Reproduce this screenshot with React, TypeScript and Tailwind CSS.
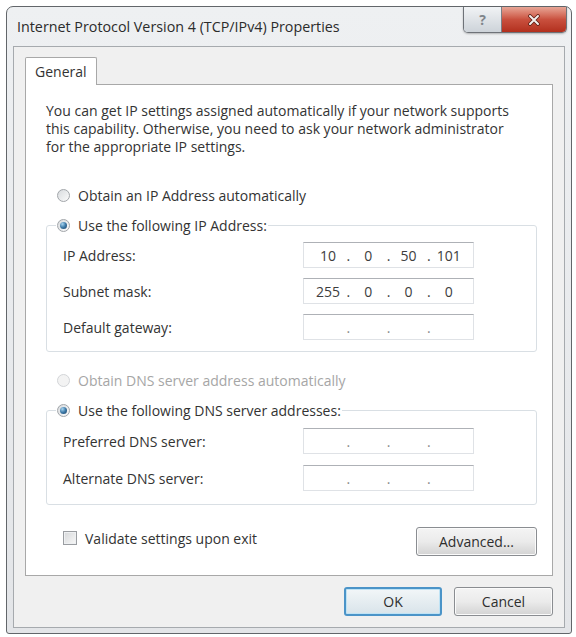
import React from 'react';

// Win7-style radio bullet
function Radio({ checked = false, disabled = false }: { checked?: boolean; disabled?: boolean }) {
  return (
    <span
      className={`shrink-0 w-[13px] h-[13px] rounded-full border flex items-center justify-center ${
        disabled
          ? 'border-[#d3d5d8] bg-[#f3f3f3]'
          : 'border-[#a2a6aa] bg-gradient-to-br from-[#d8dbde] to-[#fbfbfb]'
      }`}
    >
      {checked && (
        <span className="w-[7px] h-[7px] rounded-full bg-radial-[at_35%_30%] from-[#a6d4f0] via-[#3c78a6] to-[#1b4064]" />
      )}
    </span>
  );
}

// IP address box: four octets split by dots
function IpField({ value }: { value?: string[] }) {
  const parts = value ?? ['', '', '', ''];
  const empty = !value;
  return (
    <div className="w-[171px] h-[26px] bg-white border border-[#dfe2e6] border-t-[#aeb1b6] flex items-center px-[6px] text-[#3d3d3d]">
      {parts.map((p, i) => (
        <React.Fragment key={i}>
          <span className="flex-1 text-center">{p}</span>
          {i < 3 && (
            <span className={`w-[4px] text-center ${empty ? 'text-[#8a8a8a]' : 'text-[#3d3d3d]'}`}>.</span>
          )}
        </React.Fragment>
      ))}
    </div>
  );
}

function Row({ label, value }: { label: string; value?: string[] }) {
  return (
    <div className="flex items-center h-[26px] pl-[16px]">
      <span className="w-[240px]">{label}</span>
      <IpField value={value} />
    </div>
  );
}

function WinButton({ label, width, primary = false }: { label: string; width: string; primary?: boolean }) {
  return (
    <button
      className={`${width} h-[29px] rounded-[3px] flex items-center justify-center text-[#2e2e2e] ${
        primary
          ? 'border-2 border-[#4b94c8] bg-gradient-to-b from-[#f2f6f8] to-[#d9e4ea] shadow-[inset_0_0_0_1px_#bfe3f5]'
          : 'border border-[#8a8d91] bg-gradient-to-b from-[#f4f4f4] via-[#ebebeb] to-[#d3d3d3] shadow-[inset_0_0_0_1px_#fbfbfb]'
      }`}
    >
      {label}
    </button>
  );
}

export default function App() {
  return (
    <div className="w-[576px] h-[637px] bg-white pt-[6px] pl-[6px] pr-[4px] pb-[3px] font-['Open_Sans',sans-serif] text-[14px] text-[#333333]">
      <div className="h-full flex flex-col rounded-t-[7px] rounded-b-[3px] border border-[#62666a] bg-gradient-to-b from-[#eef0f2] to-[#e3e5e8]">
        {/* title bar */}
        <div className="h-[39px] shrink-0 flex items-start justify-between pl-[10px] pr-[4px]">
          <span className="self-center text-[14.3px] text-[#2b2b2b]">Internet Protocol Version 4 (TCP/IPv4) Properties</span>
          <div className="flex h-[26px] rounded-b-[5px] border border-t-0 border-[#6e7278] overflow-hidden shadow-[0_1px_2px_rgba(0,0,0,0.25)]">
            <div className="w-[38px] flex items-center justify-center bg-gradient-to-b from-[#f1f3f5] to-[#cdd3d9] border-r border-[#7b7f85] text-[14px] font-bold text-[#80858b]">
              ?
            </div>
            <div className="w-[64px] flex items-center justify-center bg-gradient-to-b from-[#e7a596] via-[#c9503e] to-[#b22f1d]">
              <svg width="14" height="12" viewBox="0 0 14 12">
                <path d="M3 2 L11 10 M11 2 L3 10" stroke="#5b1f16" strokeWidth="3.6" strokeLinecap="round" />
                <path d="M3 2 L11 10 M11 2 L3 10" stroke="#f4f0ee" strokeWidth="2" strokeLinecap="round" />
              </svg>
            </div>
          </div>
        </div>

        {/* client area */}
        <div className="flex-1 mx-[6px] mb-[5px] border border-[#a6aaae] bg-[#f0f0f0] pt-[10px] px-[11px] pb-[11px] flex flex-col">
          <div className="flex">
            <div className="relative z-10 -mb-px w-[72px] h-[28px] bg-white border border-b-0 border-[#a8a8a8] rounded-t-[2px] flex items-center pl-[9px]">
              General
            </div>
          </div>

          <div className="h-[492px] bg-white border border-[#a8a8a8] pl-[20px] pr-[15px] pt-[17px] flex flex-col">
            <p className="leading-[18px] whitespace-nowrap">
              You can get IP settings assigned automatically if your network supports
              <br />
              this capability. Otherwise, you need to ask your network administrator
              <br />
              for the appropriate IP settings.
            </p>

            <div className="mt-[30px] h-[18px] ml-[11px] flex items-center gap-[8px]">
              <Radio />
              <span>Obtain an IP Address automatically</span>
            </div>

            <fieldset className="mt-[12px] border border-[#d9dfe4] rounded-[3px] pt-[8px] pb-[11px] flex flex-col gap-[10px]">
              <legend className="ml-[9px] px-[1px]">
                <span className="h-[18px] flex items-center gap-[8px]">
                  <Radio checked />
                  <span>Use the following IP Address:</span>
                </span>
              </legend>
              <Row label="IP Address:" value={['10', '0', '50', '101']} />
              <Row label="Subnet mask:" value={['255', '0', '0', '0']} />
              <Row label="Default gateway:" />
            </fieldset>

            <div className="mt-[19px] h-[18px] ml-[11px] flex items-center gap-[8px] text-[#a6a6a6]">
              <Radio disabled />
              <span>Obtain DNS server address automatically</span>
            </div>

            <fieldset className="mt-[12px] border border-[#d9dfe4] rounded-[3px] pt-[9px] pb-[13px] flex flex-col gap-[11px]">
              <legend className="ml-[9px] px-[1px]">
                <span className="h-[18px] flex items-center gap-[8px]">
                  <Radio checked />
                  <span>Use the following DNS server addresses:</span>
                </span>
              </legend>
              <Row label="Preferred DNS server:" />
              <Row label="Alternate DNS server:" />
            </fieldset>

            <div className="mt-[22px] flex items-start justify-between">
              <div className="mt-[2px] ml-[17px] h-[18px] flex items-center gap-[8px]">
                <span className="w-[14px] h-[14px] border border-[#9a9da1] bg-gradient-to-br from-[#d6d8da] to-[#f8f8f8] shadow-[inset_0_0_0_1px_#eef0f2]" />
                <span>Validate settings upon exit</span>
              </div>
              <WinButton label="Advanced..." width="w-[121px]" />
            </div>
          </div>

          <div className="mt-[11px] flex justify-end gap-[12px]">
            <WinButton label="OK" width="w-[98px]" primary />
            <WinButton label="Cancel" width="w-[99px]" />
          </div>
        </div>
      </div>
    </div>
  );
}
